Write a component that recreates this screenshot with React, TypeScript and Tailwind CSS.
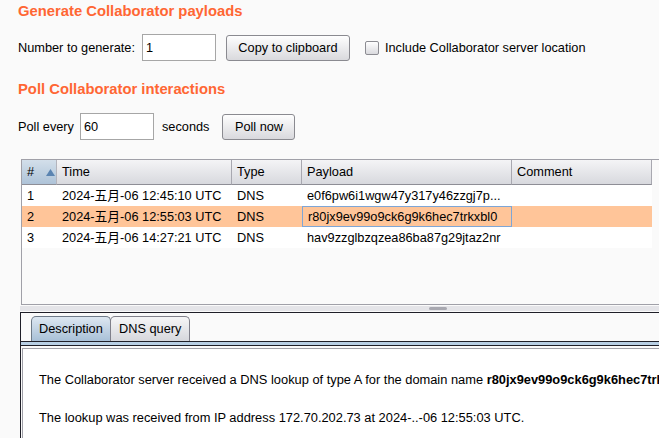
import React from "react";

type Interaction = {
  id: number;
  time: string;
  type: string;
  payload: string;
  comment: string;
  selected?: boolean;
};

const rows: Interaction[] = [
  { id: 1, time: "2024-五月-06 12:45:10 UTC", type: "DNS", payload: "e0f6pw6i1wgw47y317y46zzgj7p...", comment: "" },
  { id: 2, time: "2024-五月-06 12:55:03 UTC", type: "DNS", payload: "r80jx9ev99o9ck6g9k6hec7trkxbl0", comment: "", selected: true },
  { id: 3, time: "2024-五月-06 14:27:21 UTC", type: "DNS", payload: "hav9zzglbzqzea86ba87g29jtaz2nr", comment: "" },
];

const font = "font-['Liberation_Sans','Noto_Sans_CJK_SC',Arial,sans-serif]";

function SwingButton({ children, className }: { children: React.ReactNode; className?: string }) {
  return (
    <button
      className={`h-[26px] rounded-[3px] border border-[#8a8a90] bg-gradient-to-b from-[#fefefe] to-[#d9d9dd] text-black ${className ?? ""}`}
    >
      {children}
    </button>
  );
}

function SwingInput({ value, className }: { value: string; className?: string }) {
  return (
    <div
      className={`h-[27px] border border-[#a6a6a6] bg-white pl-[3px] leading-[25px] ${className ?? ""}`}
    >
      {value}
    </div>
  );
}

export default function App() {
  return (
    <div className={`h-[438px] w-[659px] overflow-hidden bg-[#fafafa] text-[12.75px] text-black ${font}`}>
      {/* Generate */}
      <div className="mt-[1px] h-[20px] pl-[18px] text-[14.8px] font-bold leading-[20px] text-[#ff6633]">
        Generate Collaborator payloads
      </div>
      <div className="mt-[13px] flex h-[27px] items-center pl-[18px]">
        <span>Number to generate:</span>
        <SwingInput value="1" className="ml-[7px] w-[74px]" />
        <SwingButton className="ml-[10px] w-[124px]">Copy to clipboard</SwingButton>
        <span className="ml-[15px] h-[14px] w-[14px] rounded-[2px] border border-[#8c8c92] bg-gradient-to-b from-white to-[#dadade]" />
        <span className="ml-[6px]">Include Collaborator server location</span>
      </div>

      {/* Poll */}
      <div className="mt-[18px] h-[20px] pl-[18px] text-[14.8px] font-bold leading-[20px] text-[#ff6633]">
        Poll Collaborator interactions
      </div>
      <div className="mt-[14px] flex h-[27px] items-center pl-[18px]">
        <span>Poll every</span>
        <SwingInput value="60" className="ml-[6px] w-[74px]" />
        <span className="ml-[8px]">seconds</span>
        <SwingButton className="ml-[13px] w-[73px]">Poll now</SwingButton>
      </div>

      {/* Table */}
      <div className="ml-[21px] mt-[19px] h-[146px] border-y border-l border-[#a0a0a8]">
        <div className="flex h-[25px] leading-[24px]">
          <div className="flex w-[35px] items-center border-b border-r border-b-[#8e8e96] border-r-[#b4b4bc] bg-gradient-to-b from-[#d3dfea] to-[#aec3d8] pl-[5px]">
            <span>#</span>
            <svg className="ml-[12px]" width="9" height="7" viewBox="0 0 9 7">
              <path d="M4.5 0 L9 7 L0 7 Z" fill="#5b84b1" />
            </svg>
          </div>
          <div className="w-[175px] border-b border-r border-b-[#8e8e96] border-r-[#a8a8b0] bg-gradient-to-b from-[#f4f4f6] to-[#d8d9de] pl-[5px]">Time</div>
          <div className="w-[70px] border-b border-r border-b-[#8e8e96] border-r-[#a8a8b0] bg-gradient-to-b from-[#f4f4f6] to-[#d8d9de] pl-[5px]">Type</div>
          <div className="w-[210px] border-b border-r border-b-[#8e8e96] border-r-[#a8a8b0] bg-gradient-to-b from-[#f4f4f6] to-[#d8d9de] pl-[5px]">Payload</div>
          <div className="w-[140px] border-b border-r border-b-[#8e8e96] border-r-[#a8a8b0] bg-gradient-to-b from-[#f4f4f6] to-[#d8d9de] pl-[5px]">Comment</div>
        </div>
        {rows.map((r) => (
          <div
            key={r.id}
            className={`flex h-[21px] w-[630px] whitespace-nowrap leading-[21px] ${r.selected ? "bg-[#ffc599]" : "bg-white"}`}
          >
            <div className="w-[35px] pl-[5px]">{r.id}</div>
            <div className="w-[175px] pl-[5px]">{r.time}</div>
            <div className="w-[70px] pl-[5px]">{r.type}</div>
            <div
              className={`w-[210px] overflow-hidden pl-[5px] ${r.selected ? "border border-[#7ea6d6] pl-[4px] leading-[19px]" : ""}`}
            >
              {r.payload}
            </div>
            <div className="w-[140px] pl-[5px]">{r.comment}</div>
          </div>
        ))}
      </div>

      {/* Splitter */}
      <div className="h-[7px] pt-[1px]">
        <div className="ml-[20px] flex h-[5px] bg-[#e4e4e8] pl-[409px]">
          <div className="mt-[1px] h-[3px] w-[18px] rounded-[2px] bg-[#a8a8b0]" />
        </div>
      </div>

      {/* Detail panel */}
      <div className="ml-[20px] h-[200px] border-l border-t border-[#1f1f28]">
        <div className="flex h-[28px] items-end pl-[10px]">
          <div className="h-[25px] w-[80px] rounded-t-[5px] border border-b-0 border-[#6e7a88] bg-gradient-to-b from-[#dde7f1] to-[#a8c0d7] pl-[7px] leading-[24px]">
            Description
          </div>
          <div className="ml-[-1px] h-[25px] w-[80px] rounded-t-[5px] border border-b-0 border-[#80808a] bg-gradient-to-b from-[#f6f6f7] to-[#d6d7dc] pl-[8px] leading-[24px]">
            DNS query
          </div>
        </div>
        <div className="h-[5px] border-y border-[#1f1f28] bg-[#b8cfe4]" />
        <div className="h-[2px]" />
        <div className="ml-[1px] h-[100px] whitespace-nowrap border-l border-t border-[#a0a0a8] bg-white pl-[16px] pt-[23px] text-[12.85px] leading-[16px]">
          <div>
            The Collaborator server received a DNS lookup of type A for the domain name{" "}
            <span className="font-bold">r80jx9ev99o9ck6g9k6hec7trkxbl0.oastify.com</span>.
          </div>
          <div className="mt-[22px]">
            The lookup was received from IP address 172.70.202.73 at 2024-..-06 12:55:03 UTC.
          </div>
        </div>
      </div>
    </div>
  );
}
